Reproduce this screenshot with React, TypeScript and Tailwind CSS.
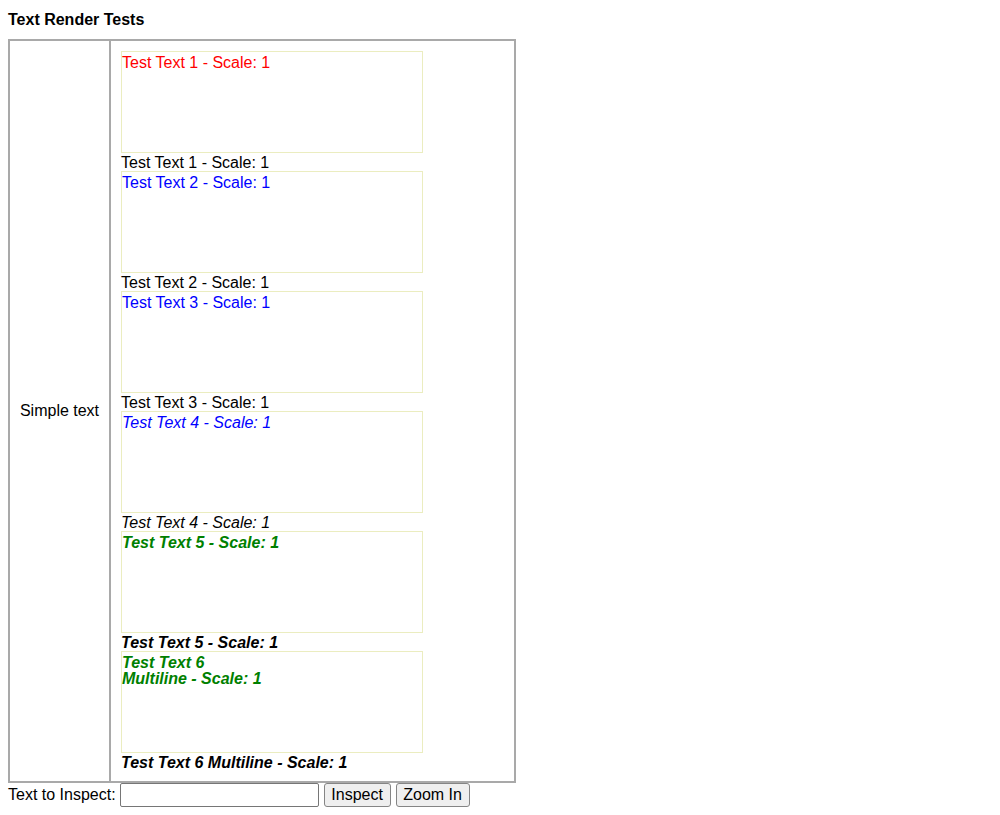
import React from 'react';

const tests = [
  { label: 'Test Text 1 - Scale: 1', color: 'text-[#ff0000]', style: '' },
  { label: 'Test Text 2 - Scale: 1', color: 'text-[#0000ff]', style: '' },
  { label: 'Test Text 3 - Scale: 1', color: 'text-[#0000ff]', style: '' },
  { label: 'Test Text 4 - Scale: 1', color: 'text-[#0000ff]', style: 'italic' },
  { label: 'Test Text 5 - Scale: 1', color: 'text-[#008000]', style: 'italic font-bold' },
];

export default function App() {
  return (
    <div className="min-h-[815px] bg-white px-2 pt-[10px] text-[16px] text-black" style={{ fontFamily: '"Liberation Sans", Arial, sans-serif' }}>
      <div className="h-[18px] font-bold leading-[20px]">Text Render Tests</div>

      <div className="mt-[11px] flex w-[508px] border-2 border-[#a9a9a9]">
        <div className="flex w-[99px] shrink-0 items-center justify-center leading-[18px]">Simple text</div>
        <div className="flex-1 border-l-2 border-[#a9a9a9] p-[10px]">
          {tests.map((t) => (
            <div key={t.label}>
              <div className={`h-[102px] w-[302px] border border-[#ebedc0] pt-[3px] leading-[16px] ${t.color} ${t.style}`}>
                {t.label}
              </div>
              <div className={`h-[18px] leading-[20px] ${t.style}`}>{t.label}</div>
            </div>
          ))}
          <div>
            <div className="h-[102px] w-[302px] border border-[#ebedc0] pt-[3px] font-bold italic leading-[16px] text-[#008000]">
              <div>Test Text 6</div>
              <div>Multiline - Scale: 1</div>
            </div>
            <div className="h-[18px] font-bold italic leading-[20px]">Test Text 6 Multiline - Scale: 1</div>
          </div>
        </div>
      </div>

      <div className="flex h-[24px] items-center">
        <span className="leading-[20px]">Text to Inspect:</span>
        <input
          type="text"
          className="ml-[4px] h-[24px] w-[199px] rounded-[2px] border border-[#767676] bg-white px-[2px] outline-none"
        />
        <button className="ml-[5px] h-[24px] w-[67px] rounded-[3px] border border-[#858585] bg-[#efefef] leading-[18px]">
          Inspect
        </button>
        <button className="ml-[5px] h-[24px] w-[74px] rounded-[3px] border border-[#858585] bg-[#efefef] leading-[18px]">
          Zoom In
        </button>
      </div>
    </div>
  );
}
